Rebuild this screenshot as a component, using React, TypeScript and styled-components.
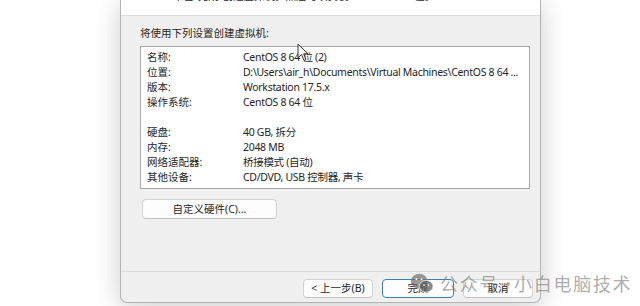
import React from "react";
import styled, { createGlobalStyle } from "styled-components";

const Global = createGlobalStyle`
  html, body { margin: 0; padding: 0; background: #ffffff; }
  body { width: 640px; height: 306px; overflow: hidden; }
  * { box-sizing: border-box; }
`;

const FONT = `"Noto Sans", "Noto Sans CJK SC", sans-serif`;

const Stage = styled.div`
  position: relative;
  width: 640px;
  height: 306px;
  padding-left: 120px;
  display: flex;
  align-items: flex-start;
  font-family: ${FONT};
  color: #262626;
  font-size: 10.5px;
`;

const Dialog = styled.div`
  width: 421px;
  height: 303px;
  display: flex;
  flex-direction: column;
  background: #f0f0f0;
  border: 1px solid #b4b4b4;
  border-top: none;
  border-radius: 0 0 7px 7px;
  box-shadow: 0 4px 26px rgba(0, 0, 0, 0.2);
  overflow: hidden;
`;

const Header = styled.div`
  height: 16px;
  background: #ffffff;
  border-bottom: 1px solid #dcdcdc;
  overflow: hidden;
  padding-left: 52px;
`;

const HeaderText = styled.div`
  margin-top: -11px;
  line-height: 15px;
  white-space: nowrap;
  color: #1e1e1e;
`;

const Body = styled.div`
  flex: 1;
  padding: 10px 10px 0 19px;
  display: flex;
  flex-direction: column;
  align-items: flex-start;
`;

const Heading = styled.div`
  line-height: 15px;
  margin-bottom: 5px;
`;

const SummaryBox = styled.div`
  align-self: stretch;
  background: #ffffff;
  border: 1px solid #a8a8a8;
  padding: 3px 6px 3px 6px;
  display: grid;
  grid-template-columns: 96px 1fr;
  grid-auto-rows: 15px;
  line-height: 15px;
`;

const Label = styled.div`
  white-space: nowrap;
  height: 15px;
`;

const Value = styled.div`
  white-space: nowrap;
  height: 15px;
  letter-spacing: -0.3px;
`;

const Button = styled.button<{ $w: number; $default?: boolean }>`
  width: ${(p) => p.$w}px;
  height: 19px;
  padding: 0;
  font-family: ${FONT};
  font-size: 10.5px;
  color: #262626;
  background: #fdfdfd;
  border: 1px solid ${(p) => (p.$default ? "#3f7fae" : "#d2d2d2")};
  border-bottom-color: ${(p) => (p.$default ? "#3f7fae" : "#c2c2c2")};
  border-radius: 4px;
  line-height: 17px;
  text-align: center;
`;

const CustomButton = styled(Button)`
  height: 20px;
  margin-top: 10px;
  margin-left: 2px;
`;

const Footer = styled.div`
  height: 31px;
  border-top: 1px solid #dadada;
  display: flex;
  justify-content: flex-end;
  align-items: flex-start;
  gap: 9px;
  padding: 7px 7px 0 0;
`;

const Watermark = styled.div`
  position: absolute;
  left: 410px;
  top: 270px;
  display: flex;
  align-items: center;
  gap: 6px;
  font-family: "Noto Sans CJK SC", sans-serif;
  font-size: 18px;
  letter-spacing: 1.7px;
  color: rgba(120, 120, 120, 0.62);
  white-space: nowrap;
`;

const Dot = styled.span`
  display: inline-block;
  width: 15px;
  text-align: center;
  letter-spacing: 0;
`;

const Cursor = styled.svg`
  position: absolute;
  left: 297px;
  top: 43px;
`;

const rows: [string, string][] = [
  ["名称:", "CentOS 8 64 位 (2)"],
  ["位置:", "D:\\Users\\air_h\\Documents\\Virtual Machines\\CentOS 8 64 ..."],
  ["版本:", "Workstation 17.5.x"],
  ["操作系统:", "CentOS 8 64 位"],
  ["", ""],
  ["硬盘:", "40 GB, 拆分"],
  ["内存:", "2048 MB"],
  ["网络适配器:", "桥接模式 (自动)"],
  ["其他设备:", "CD/DVD, USB 控制器, 声卡"],
];

export default function App() {
  return (
    <Stage>
      <Global />
      <Dialog>
        <Header>
          <HeaderText>单击“完成”创建虚拟机。然后可以安装 CentOS 8 64 位。</HeaderText>
        </Header>
        <Body>
          <Heading>将使用下列设置创建虚拟机:</Heading>
          <SummaryBox>
            {rows.map(([k, v], i) => (
              <React.Fragment key={i}>
                <Label>{k}</Label>
                <Value>{v}</Value>
              </React.Fragment>
            ))}
          </SummaryBox>
          <CustomButton $w={135}>自定义硬件(C)...</CustomButton>
        </Body>
        <Footer>
          <Button $w={70}>&lt; 上一步(B)</Button>
          <Button $w={72} $default>完成</Button>
          <Button $w={70}>取消</Button>
        </Footer>
      </Dialog>
      <Cursor width="12" height="19" viewBox="0 0 12 19">
        <path
          d="M1 1 L1 15 L4.5 11.5 L7 17.5 L9 16.6 L6.6 10.8 L11 10.8 Z"
          fill="#ffffff"
          fillOpacity="0.85"
          stroke="#333"
          strokeWidth="1"
          strokeLinejoin="round"
        />
      </Cursor>
      <Watermark>
        <svg width="24" height="23" viewBox="0 0 26 24">
          <ellipse cx="10" cy="9.5" rx="9" ry="8" fill="rgba(110,110,110,0.7)" />
          <ellipse cx="17.5" cy="15" rx="7.5" ry="6.5" fill="rgba(95,95,95,0.75)" stroke="#fff" strokeWidth="0.8" />
          <circle cx="7" cy="7.5" r="1.1" fill="#fff" />
          <circle cx="12.5" cy="7.5" r="1.1" fill="#fff" />
          <circle cx="15.2" cy="13.8" r="0.9" fill="#fff" />
          <circle cx="19.8" cy="13.8" r="0.9" fill="#fff" />
        </svg>
        <span>
          公众号<Dot>·</Dot>小白电脑技术
        </span>
      </Watermark>
    </Stage>
  );
}
